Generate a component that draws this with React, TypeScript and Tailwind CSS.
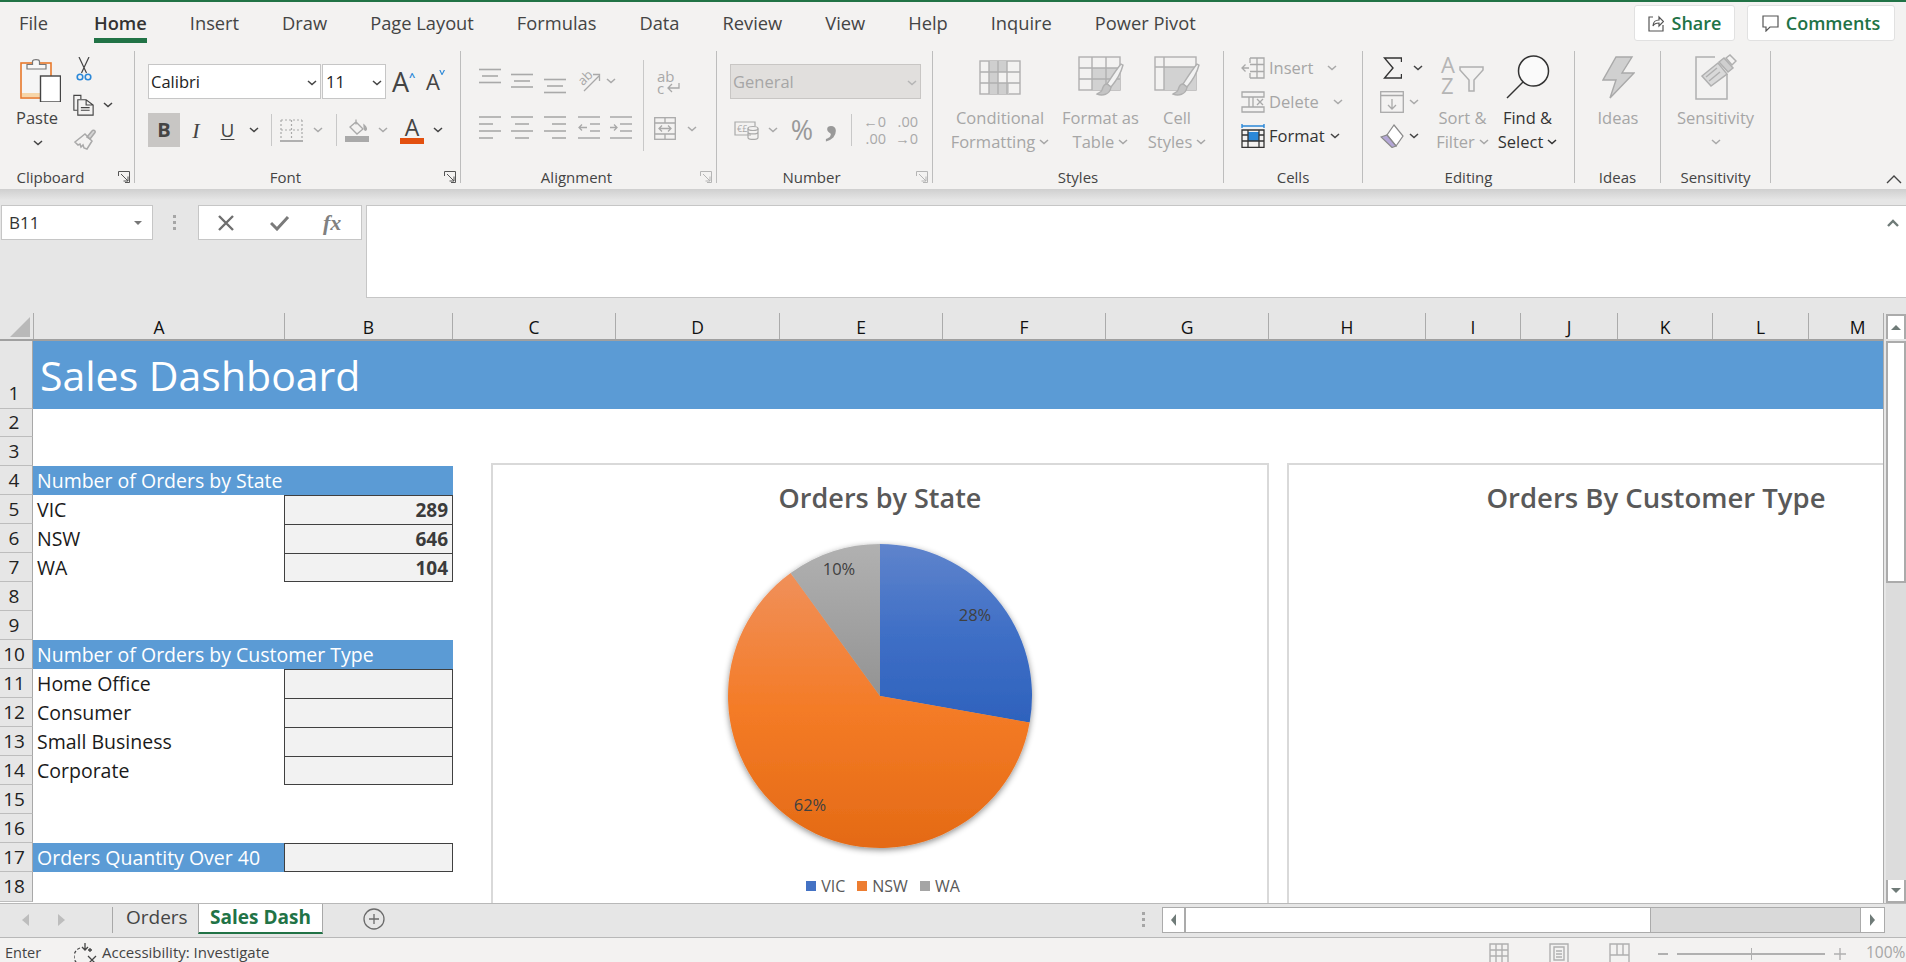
import type { ReactNode } from "react";

const dim = "#a9a9a9";
const ink = "#444444";

function Chev({ color = ink, className = "" }: { color?: string; className?: string }) {
  return (
    <svg width="10" height="6" viewBox="0 0 10 6" className={`shrink-0 ${className}`}>
      <path d="M1 1l4 3.6L9 1" fill="none" stroke={color} strokeWidth="1.5" />
    </svg>
  );
}

function Launcher({ color = "#666666" }: { color?: string }) {
  return (
    <svg width="12" height="12" viewBox="0 0 12 12" className="absolute right-[4px] bottom-0">
      <path d="M.5 5V.5H11.5V11.5H7M3 3l7 7M10 5.5V10H5.5" fill="none" stroke={color} strokeWidth="1" />
    </svg>
  );
}

function Group({ w, label, launcher, pr = 0, children }: { w: number; label: string; launcher?: string; pr?: number; children: ReactNode }) {
  return (
    <div className="relative flex h-[132px] shrink-0 flex-col border-r border-[#bdbdbd]" style={{ width: w }}>
      <div className="flex h-[117px] shrink-0 items-start">{children}</div>
      <div className="flex h-[18px] shrink-0 items-center justify-center text-[15px] leading-[18px] text-[#444444]" style={{ paddingRight: pr }}>{label}</div>
      {launcher && <Launcher color={launcher} />}
    </div>
  );
}

function Big({ icon, lines, color, chev, w, ml, iconTop = 10 }: { icon: ReactNode; lines: string[]; color: string; chev?: boolean; w: number; ml: number; iconTop?: number }) {
  return (
    <div className="flex shrink-0 flex-col items-center text-[16.5px] leading-[24px]" style={{ width: w, marginLeft: ml, color }}>
      <div className="flex h-[44px] items-center justify-center" style={{ marginTop: iconTop - 6 }}>{icon}</div>
      <div className="mt-[7px] whitespace-nowrap">{lines[0]}</div>
      <div className="flex items-center gap-[4px] whitespace-nowrap">
        {lines[1]}
        {chev && <Chev color={color} />}
      </div>
    </div>
  );
}

function Lines({ rows, h = 35 }: { rows: [number, number, number][]; h?: number }) {
  return (
    <svg width="22" height={h} viewBox={`0 0 22 ${h}`} className="shrink-0">
      {rows.map(([a, b, y], i) => (
        <path key={i} d={`M${a} ${y}H${b}`} stroke={dim} strokeWidth="1.6" />
      ))}
    </svg>
  );
}

function PasteIcon() {
  return (
    <svg width="41" height="44" viewBox="0 0 41 44">
      <rect x="1" y="5" width="30" height="35" fill="#f5f5f5" stroke="#e8792b" strokeWidth="1.6" />
      <rect x="2" y="35" width="18" height="4" fill="#f6d5a8" />
      <path d="M7 11V6.5h5.5V3.5C12.5 1 19.5 1 19.5 3.5V6.5H26V11Z" fill="#f7f7f7" stroke="#777" strokeWidth="1.2" />
      <rect x="20.5" y="18" width="20" height="26" fill="#fff" stroke="#444" strokeWidth="1.4" />
    </svg>
  );
}

function ScissorsIcon() {
  return (
    <svg width="16" height="24" viewBox="0 0 16 24">
      <path d="M3 0l7.5 16M13 0L5.5 16" stroke="#444" strokeWidth="1.2" fill="none" />
      <circle cx="4" cy="20" r="2.8" fill="none" stroke="#2b88d8" strokeWidth="1.6" />
      <circle cx="12" cy="20" r="2.8" fill="none" stroke="#2b88d8" strokeWidth="1.6" />
    </svg>
  );
}

function CopyIcon() {
  return (
    <svg width="24" height="24" viewBox="0 0 24 24" fill="none" stroke="#444" strokeWidth="1.3">
      <path d="M5 18H1V1h8v4" />
      <path d="M5.5 6H15l8 6v11.5H5.5ZM15 6v6h8M9 15h10M9 18h10" />
    </svg>
  );
}

function BrushIcon() {
  return (
    <svg width="23" height="22" viewBox="0 0 23 22" fill="none" stroke={dim} strokeWidth="1.5">
      <path d="M14 9l5-6c1-2 4 0 3 1.500l-5 6.500Z" fill="#d4d4d4" />
      <path d="M12 6l7 7-5 8-3-1-1-3-2 2-1-3-2 1-3-3Z" />
    </svg>
  );
}

function BordersIcon() {
  return (
    <svg width="23" height="23" viewBox="0 0 23 23" fill="none" stroke={dim} strokeWidth="1.2">
      <path d="M1 1H22M1 1V21M22 1V21M11.500 1V21M1 11H22" strokeDasharray="2 2" />
      <path d="M0 22H23" strokeWidth="1.8" />
    </svg>
  );
}

function FillIcon() {
  return (
    <svg width="24" height="23" viewBox="0 0 24 23" fill="none" stroke={dim} strokeWidth="1.3">
      <path d="M11 0.500v5M5 8l6-5 7 7-6 5Z" />
      <path d="M19 6c2 2 3 4 2 5s-2-1-2-5Z" fill={dim} />
      <rect x="0" y="17" width="24" height="6" fill={dim} stroke="none" />
    </svg>
  );
}

function OrientIcon() {
  return (
    <svg width="24" height="22" viewBox="0 0 24 22" className="overflow-visible">
      <text x="2" y="13" fontSize="13" fill={dim} transform="rotate(-45 8 10)" fontFamily="Open Sans, sans-serif">ab</text>
      <path d="M7 21L22 6M16 4.500h6.500V11" fill="none" stroke={dim} strokeWidth="1.3" />
    </svg>
  );
}

function WrapIcon() {
  return (
    <div className="relative h-[24px] w-[23px] text-[15px] leading-[12px] text-[#a9a9a9]">
      <div>ab</div>
      <div>c</div>
      <svg width="14" height="11" viewBox="0 0 14 11" className="absolute right-0 bottom-0" fill="none" stroke={dim} strokeWidth="1.3">
        <path d="M13 0v5H2M6 1L2 5l4 4" />
      </svg>
    </div>
  );
}

function IndentIcon({ flip }: { flip?: boolean }) {
  return (
    <svg width="22" height="35" viewBox="0 0 22 35" fill="none" stroke={dim} strokeWidth="1.6" className="shrink-0">
      <path d="M0 4H22M0 25H22" />
      {flip ? <path d="M10 11H22M10 18H22M0 14.500H7M4 11.500l3 3-3 3" strokeWidth="1.3" /> : <path d="M12 11H22M12 18H22M1 14.500H9M4 11.500l-3 3 3 3" strokeWidth="1.3" />}
    </svg>
  );
}

function MergeIcon() {
  return (
    <svg width="22" height="23" viewBox="0 0 22 23" fill="none" stroke={dim} strokeWidth="1.3">
      <rect x="0.7" y="0.7" width="20.600" height="21.600" />
      <path d="M1 6H21M1 17H21M11 1V6M11 17V22M5 11.500H17M8 8.500l-3 3 3 3M14 8.500l3 3-3 3" />
    </svg>
  );
}

function AccountingIcon() {
  return (
    <svg width="25" height="20" viewBox="0 0 25 20" fill="none" stroke={dim} strokeWidth="1.2">
      <path d="M17 15H1V2h20v4" />
      <text x="3" y="12" fontSize="9" fill={dim} stroke="none" fontFamily="Open Sans, sans-serif">€£</text>
      <ellipse cx="19" cy="8.500" rx="5" ry="2" />
      <path d="M14 8.500V17.500c0 2.600 10 2.600 10 0V8.500M14 12c0 2.600 10 2.600 10 0" />
    </svg>
  );
}

function CondIcon() {
  return (
    <svg width="42" height="35" viewBox="0 0 42 35" fill="none" stroke="#b0b0b0" strokeWidth="1.4">
      <rect x="1" y="1" width="40" height="33" />
      <rect x="10" y="1" width="18" height="11" fill="#cfcfcf" stroke="none" />
      <rect x="10" y="12" width="9" height="11" fill="#cfcfcf" stroke="none" />
      <rect x="10" y="23" width="20" height="11" fill="#cfcfcf" stroke="none" />
      <path d="M1 12H41M1 23H41M10 1V34M19 1V34M28 1V34" />
    </svg>
  );
}

function TableBrushIcon({ cellStyle }: { cellStyle?: boolean }) {
  return (
    <svg width="46" height="42" viewBox="0 0 46 42" fill="none" stroke="#b0b0b0" strokeWidth="1.4">
      <rect x="1" y="1" width="41" height="33" />
      {cellStyle ? <rect x="10" y="11" width="32" height="23" fill="#d2d2d2" stroke="none" /> : <rect x="14" y="12" width="28" height="22" fill="#d2d2d2" stroke="none" />}
      {cellStyle ? <path d="M1 11H42M10 1V34" /> : <path d="M1 12H42M1 23H42M14 1V34M28 1V34" />}
      <path d="M43 8C38 14 33 22 29 28l4 3C38 25 43 17 45 9Z" fill="#f2f2f2" />
      <path d="M29 28c-4 0-4 4-5 6-1 3-4 3-5 4 5 2 13 1 14-7Z" fill="#c4c4c4" />
    </svg>
  );
}

function InsertIcon() {
  return (
    <svg width="24" height="22" viewBox="0 0 24 22" fill="none" stroke={dim} strokeWidth="1.3">
      <path d="M9 1H23V21H9M9 1V6M9 16V21M9 7.500H23M9 14.500H23M16 1V21" />
      <path d="M8 11H1M4.500 7.500L1 11l3.500 3.500" />
    </svg>
  );
}

function DeleteIcon() {
  return (
    <svg width="24" height="22" viewBox="0 0 24 22" fill="none" stroke={dim} strokeWidth="1.3">
      <path d="M1 1H23V6H1ZM1 16H23V21H1ZM8 6V16M12 6V16" />
      <path d="M16 8l6 6M22 8l-6 6" />
    </svg>
  );
}

function FormatIcon() {
  return (
    <svg width="24" height="24" viewBox="0 0 24 24" fill="none">
      <path d="M1 2H23M1 0V4M23 0V4" stroke="#2b88d8" strokeWidth="1.4" />
      <rect x="7" y="8" width="11" height="9" fill="#2b88d8" />
      <path d="M1 6H23V23.300H1ZM1 17H23M7 6V23M18 6V23M1 11H7M18 11H23" stroke="#333" strokeWidth="1.3" />
    </svg>
  );
}

function SigmaIcon() {
  return (
    <svg width="19" height="22" viewBox="0 0 19 22" fill="none" stroke="#333" strokeWidth="1.4">
      <path d="M18.500 5V1H1.500l8.500 10-8.500 10H18.500v-4" />
    </svg>
  );
}

function FillDownIcon() {
  return (
    <svg width="24" height="22" viewBox="0 0 24 22" fill="none" stroke={dim} strokeWidth="1.3">
      <rect x="0.700" y="0.700" width="22.600" height="20.600" />
      <path d="M1 4.500H23M12 8V18M8 14l4 4 4-4" />
    </svg>
  );
}

function EraserIcon() {
  return (
    <svg width="24" height="24" viewBox="0 0 24 24" stroke="#8a8a8a" strokeWidth="1.2">
      <path d="M14 1l9 11-7 10-9-11Z" fill="#fff" />
      <path d="M7 11l9 11-4 1.500L1 13Z" fill="#b4a7d6" />
    </svg>
  );
}

function SortIcon() {
  return (
    <div className="relative h-[41px] w-[43px] text-[#b5b5b5]">
      <div className="absolute left-0 top-[-3px] text-[22px] leading-[21px]">A</div>
      <div className="absolute left-0 top-[18px] text-[22px] leading-[21px]">Z</div>
      <svg width="25" height="26" viewBox="0 0 25 26" className="absolute right-0 top-[9px]" fill="none" stroke="#b0b0b0" strokeWidth="1.5">
        <path d="M1 1H24V4L15 14V25H10V14L1 4Z" />
      </svg>
    </div>
  );
}

function SearchIcon() {
  return (
    <svg width="44" height="44" viewBox="0 0 44 44" fill="none" stroke="#333" strokeWidth="1.5">
      <circle cx="27.500" cy="16" r="15" fill="#fafafa" />
      <path d="M17 27L1 43" />
    </svg>
  );
}

function BoltIcon() {
  return (
    <svg width="33" height="43" viewBox="0 0 33 43">
      <path d="M14 1H30L20 17H32L8 42l6-18H1Z" fill="#d0d0d0" stroke="#a9a9a9" strokeWidth="1.4" />
    </svg>
  );
}

function SensitivityIcon() {
  return (
    <svg width="42" height="46" viewBox="0 0 42 46" fill="none" stroke="#b0b0b0" strokeWidth="1.5">
      <path d="M20 3H1V45H32V20" />
      <path d="M7 22L23 9l9 11-16 12Z" fill="#d9d9d9" />
      <path d="M11 23l11-9M14 27l11-9" />
      <path d="M24 8l5-4 9 10-5 4Z" fill="#cfcfcf" />
      <path d="M31 4l4-3 6 6-4 4Z" />
    </svg>
  );
}

function AccessIcon() {
  return (
    <svg width="23" height="24" viewBox="0 0 23 24" fill="none" stroke="#444" strokeWidth="1.300">
      <path d="M6 5a9 9 0 1 0 6 17" strokeDasharray="3 2" />
      <path d="M11 0v7M8 4l3 3 3-3M16 5v4M14 7h4M14 13l8 8M22 13l-8 8" />
    </svg>
  );
}

function Ribbon() {
  return (
    <div className="relative flex h-[141px] bg-[#f3f2f1] pt-[3px]">
      <Group w={135} label="Clipboard" launcher="#555555" pr={33}>
        <div className="ml-[20px] mt-[7px] flex w-[41px] flex-col items-center text-[16.500px] leading-[22px] text-[#444444]">
          <PasteIcon />
          <div className="mt-[5px] pr-[7px]">Paste</div>
          <Chev className="mt-[11px] -translate-x-[3px]" />
        </div>
        <div className="ml-[12px] flex w-[40px] flex-col">
          <div className="ml-[3px] mt-[6px]"><ScissorsIcon /></div>
          <div className="mt-[12px] flex items-center gap-[9px]"><CopyIcon /><Chev /></div>
          <div className="mt-[11px]"><BrushIcon /></div>
        </div>
      </Group>

      <Group w={326} label="Font" launcher="#555555" pr={24}>
        <div className="ml-[13px] mt-[13px] flex flex-col">
          <div className="flex items-center">
            <div className="flex h-[35px] w-[173px] items-center justify-between border border-[#c6c6c6] bg-white pl-[2px] pr-[3px] pt-[2px] text-[16.500px] text-[#222222]">Calibri<Chev /></div>
            <div className="ml-[1px] flex h-[35px] w-[64px] items-center justify-between border border-[#c6c6c6] bg-white pl-[3px] pr-[3px] pt-[2px] text-[16.500px] text-[#222222]">11<Chev /></div>
            <div className="relative ml-[6px] h-[35px] w-[24px] text-[27px] leading-[35px] text-[#444444]">A<span className="absolute left-[17px] top-[-5px] text-[11px] font-bold text-[#2b88d8]">^</span></div>
            <div className="relative ml-[10px] h-[35px] w-[20px] text-[22px] leading-[35px] text-[#444444]">A<span className="absolute left-[13px] top-[-10px] -scale-y-100 text-[11px] font-bold text-[#2b88d8]">^</span></div>
          </div>
          <div className="mt-[14px] flex h-[34px] items-center text-[#444444]">
            <div className="flex h-[34px] w-[32px] items-center justify-center bg-[#c8c6c4] text-[20px] font-bold">B</div>
            <div className="w-[32px] text-center font-['Liberation_Serif',serif] text-[22px] italic">I</div>
            <div className="w-[31px] text-center text-[19px] leading-[22px] underline underline-offset-2">U</div>
            <div className="flex w-[22px] justify-center"><Chev /></div>
            <div className="ml-[6px] h-[32px] w-px bg-[#c8c8c8]" />
            <div className="ml-[8px]"><BordersIcon /></div>
            <div className="ml-[10px]"><Chev color={dim} /></div>
            <div className="ml-[13px] h-[32px] w-px bg-[#c8c8c8]" />
            <div className="ml-[8px]"><FillIcon /></div>
            <div className="ml-[9px]"><Chev color={dim} /></div>
            <div className="ml-[12px] flex w-[24px] flex-col items-center">
              <span className="h-[20px] text-[23px] leading-[20px]">A</span>
              <span className="mt-[1px] h-[6px] w-[24px] bg-[#e3500f]" />
            </div>
            <div className="ml-[9px]"><Chev /></div>
          </div>
        </div>
      </Group>

      <Group w={256} label="Alignment" launcher="#b5b5b5" pr={24}>
        <div className="ml-[18px] mt-[13px] flex w-[164px] shrink-0 flex-col">
          <div className="flex h-[35px] items-start">
            <Lines rows={[[0, 22, 5.5], [3, 19, 12], [0, 22, 18.5]]} />
            <div className="ml-[10px]"><Lines rows={[[0, 22, 10.5], [3, 19, 17], [0, 22, 23]]} /></div>
            <div className="ml-[11px]"><Lines rows={[[0, 22, 15.5], [3, 19, 22], [0, 22, 28.5]]} /></div>
            <div className="ml-[11px] mt-[6px]"><OrientIcon /></div>
            <div className="ml-[5px] mt-[14px]"><Chev color={dim} /></div>
          </div>
          <div className="mt-[14px] flex h-[34px] items-start">
            <Lines rows={[[0, 22, 4], [0, 14, 11], [0, 22, 18], [0, 14, 25]]} />
            <div className="ml-[10px]"><Lines rows={[[0, 22, 4], [4, 18, 11], [0, 22, 18], [4, 18, 25]]} /></div>
            <div className="ml-[11px]"><Lines rows={[[0, 22, 4], [8, 22, 11], [0, 22, 18], [8, 22, 25]]} /></div>
            <div className="ml-[12px]"><IndentIcon /></div>
            <div className="ml-[10px]"><IndentIcon flip /></div>
          </div>
        </div>
        <div className="mt-[9px] h-[91px] w-px bg-[#c8c8c8]" />
        <div className="ml-[13px] mt-[19px] flex flex-col">
          <WrapIcon />
          <div className="-ml-[3px] mt-[23px] flex items-center gap-[11px]"><MergeIcon /><Chev color={dim} /></div>
        </div>
      </Group>

      <Group w={216} label="Number" launcher="#b5b5b5" pr={26}>
        <div className="ml-[13px] mt-[13px] flex flex-col">
          <div className="flex h-[35px] w-[191px] items-center justify-between border border-[#c8c6c4] bg-[#e1dfdd] pl-[2px] pr-[3px] pt-[2px] text-[16.500px] text-[#a6a6a6]">General<Chev color="#b5b5b5" /></div>
          <div className="mt-[14px] flex h-[34px] items-center">
            <div className="ml-[4px]"><AccountingIcon /></div>
            <div className="ml-[9px]"><Chev color={dim} /></div>
            <div className="ml-[11px] w-[26px] text-center text-[27px] leading-[34px] text-[#999999]">%</div>
            <div className="ml-[10px] h-[34px] w-[13px] text-center font-['Liberation_Serif',serif] text-[50px] font-bold leading-[6px] text-[#999999]">,</div>
            <div className="ml-[13px] h-[32px] w-px bg-[#c8c8c8]" />
            <div className="ml-[7px] flex w-[27px] flex-col text-right text-[14.500px] leading-[17px] text-[#a9a9a9]"><span>←0</span><span>.00</span></div>
            <div className="ml-[5px] flex w-[27px] flex-col text-right text-[14.500px] leading-[17px] text-[#a9a9a9]"><span>.00</span><span>→0</span></div>
          </div>
        </div>
      </Group>

      <Group w={291} label="Styles">
        <Big w={102} ml={16} color="#a6a6a6" chev icon={<CondIcon />} lines={["Conditional", "Formatting"]} />
        <Big w={77} ml={11} color="#a6a6a6" chev icon={<TableBrushIcon />} lines={["Format as", "Table"]} />
        <Big w={58} ml={9} color="#a6a6a6" chev icon={<TableBrushIcon cellStyle />} lines={["Cell", "Styles"]} />
      </Group>

      <Group w={139} label="Cells">
        <div className="ml-[17px] flex flex-col text-[16.500px]">
          <div className="flex h-[34px] items-center text-[#a6a6a6]"><InsertIcon /><span className="ml-[4px]">Insert</span><Chev color={dim} className="ml-[14px]" /></div>
          <div className="flex h-[34px] items-center text-[#a6a6a6]"><DeleteIcon /><span className="ml-[4px]">Delete</span><Chev color={dim} className="ml-[14px]" /></div>
          <div className="flex h-[34px] items-center text-[#333333]"><FormatIcon /><span className="ml-[4px]">Format</span><Chev className="ml-[5px]" /></div>
        </div>
      </Group>

      <Group w={212} label="Editing">
        <div className="ml-[17px] flex w-[44px] flex-col">
          <div className="flex h-[34px] items-center gap-[11px] pl-[3px]"><SigmaIcon /><Chev /></div>
          <div className="flex h-[34px] items-center gap-[5px]"><FillDownIcon /><Chev color={dim} /></div>
          <div className="flex h-[34px] items-center gap-[5px]"><EraserIcon /><Chev /></div>
        </div>
        <Big w={53} ml={12} color="#a6a6a6" chev icon={<SortIcon />} lines={["Sort &", "Filter"]} />
        <Big w={61} ml={8} color="#333333" chev icon={<SearchIcon />} lines={["Find &", "Select"]} />
      </Group>

      <Group w={86} label="Ideas">
        <Big w={86} ml={0} color="#a6a6a6" icon={<BoltIcon />} lines={["Ideas", ""]} />
      </Group>

      <Group w={110} label="Sensitivity">
        <div className="flex w-[110px] flex-col items-center text-[16.500px] leading-[24px] text-[#a6a6a6]">
          <div className="mt-[3px]"><SensitivityIcon /></div>
          <div className="mt-[6px]">Sensitivity</div>
          <Chev color={dim} className="mt-[9px]" />
        </div>
      </Group>

      <svg width="16" height="9" viewBox="0 0 16 9" className="absolute bottom-[5px] right-[4px]" fill="none" stroke="#444" strokeWidth="1.400">
        <path d="M1 8l7-7 7 7" />
      </svg>
    </div>
  );
}

function FormulaBar() {
  return (
    <div className="h-[124px] bg-[#e6e6e6]">
      <div className="h-[11px] bg-gradient-to-b from-[#cfcfcf] to-[#e6e6e6]" />
      <div className="mt-[5px] flex h-[92px] items-start pl-[1px]">
        <div className="flex h-[35px] w-[152px] items-center justify-between border border-[#c6c6c6] bg-white pl-[7px] pr-[10px] text-[17px] text-[#333333]">
          B11
          <span className="h-0 w-0 border-x-[4px] border-t-[4px] border-x-transparent border-t-[#777777]" />
        </div>
        <div className="ml-[20px] mt-[10px] flex w-[3px] flex-col gap-[3px]">
          <span className="h-[3px] w-[3px] bg-[#a6a6a6]" />
          <span className="h-[3px] w-[3px] bg-[#a6a6a6]" />
          <span className="h-[3px] w-[3px] bg-[#a6a6a6]" />
        </div>
        <div className="ml-[22px] flex h-[35px] w-[164px] items-center border border-[#c6c6c6] bg-white text-[#777777]">
          <svg width="18" height="16" viewBox="0 0 18 16" className="ml-[18px]" fill="none" stroke="#6f6f6f" strokeWidth="2.400"><path d="M2 1l14 14M16 1L2 15" /></svg>
          <svg width="20" height="16" viewBox="0 0 20 16" className="ml-[35px]" fill="none" stroke="#7a7a7a" strokeWidth="3"><path d="M1 8l6 6L18 2" /></svg>
          <span className="ml-[33px] font-['Liberation_Serif',serif] text-[22px] font-bold italic leading-[33px] text-[#808080]">fx</span>
        </div>
        <div className="relative ml-[4px] h-[93px] flex-1 border-y border-l border-[#c6c6c6] bg-white">
          <svg width="12" height="8" viewBox="0 0 12 8" className="absolute right-[7px] top-[13px]" fill="none" stroke="#6f7b78" strokeWidth="2.400"><path d="M1 7l5-5 5 5" /></svg>
        </div>
      </div>
    </div>
  );
}

const cols: [string, number][] = [
  ["A", 251], ["B", 168], ["C", 163], ["D", 164], ["E", 163], ["F", 163], ["G", 163],
  ["H", 157], ["I", 95], ["J", 97], ["K", 95], ["L", 96], ["M", 98],
];

type Row = { n: number; h: number; a?: string; b?: string; box?: "first" | "mid" | "last" | "solo"; head?: boolean };

const rows: Row[] = [
  { n: 2, h: 28 },
  { n: 3, h: 29 },
  { n: 4, h: 29, a: "Number of Orders by State", head: true },
  { n: 5, h: 29, a: "VIC", b: "289", box: "mid" },
  { n: 6, h: 29, a: "NSW", b: "646", box: "mid" },
  { n: 7, h: 29, a: "WA", b: "104", box: "last" },
  { n: 8, h: 29 },
  { n: 9, h: 29 },
  { n: 10, h: 29, a: "Number of Orders by Customer Type", head: true },
  { n: 11, h: 29, a: "Home Office", b: "", box: "mid" },
  { n: 12, h: 29, a: "Consumer", b: "", box: "mid" },
  { n: 13, h: 29, a: "Small Business", b: "", box: "mid" },
  { n: 14, h: 29, a: "Corporate", b: "", box: "last" },
  { n: 15, h: 29 },
  { n: 16, h: 29 },
  { n: 17, h: 29, a: "Orders Quantity Over 40", b: "", box: "solo" },
  { n: 18, h: 30 },
];

function RowHead({ n, h, end }: { n: number; h: number; end?: boolean }) {
  return (
    <div
      className={`flex w-[33px] shrink-0 justify-center border-r border-b border-r-[#a8a8a8] border-b-[#bdbdbd] bg-[#e6e6e6] pr-[4px] text-[19px] text-[#222222] ${end ? "items-end leading-[30px]" : "items-center"}`}
      style={{ height: h }}
    >
      {n}
    </div>
  );
}

function SheetRow({ row }: { row: Row }) {
  const isBlue = row.head || row.n === 17;
  return (
    <div className="flex" style={{ height: row.h }}>
      <RowHead n={row.n} h={row.h} />
      {row.a !== undefined && (
        <div className={`flex h-full items-center whitespace-nowrap pl-[4px] pt-[1px] text-[19.5px] ${isBlue ? "bg-[#5b9bd5] text-white" : "text-[#1a1a1a]"} ${row.head ? "w-[420px]" : "w-[251px]"}`}>
          {row.a}
        </div>
      )}
      {row.box && (
        <div className={`flex h-full w-[169px] items-center justify-end border-x border-t border-[#404040] bg-[#f2f2f2] pr-[4px] pt-[1px] text-[19px] font-bold text-[#3b3b3b] ${row.box === "mid" ? "" : "border-b"}`}>
          {row.b}
        </div>
      )}
    </div>
  );
}

function PieChart() {
  const cx = 160;
  const cy = 156;
  const r = 152;
  const pt = (pct: number) => {
    const t = (pct / 100) * 2 * Math.PI;
    return `${cx + r * Math.sin(t)} ${cy - r * Math.cos(t)}`;
  };
  const slice = (from: number, to: number) => `M${cx} ${cy}L${pt(from)}A${r} ${r} 0 ${to - from > 50 ? 1 : 0} 1 ${pt(to)}Z`;
  return (
    <svg width="320" height="320" viewBox="0 0 320 320">
      <defs>
        <linearGradient id="pieBlue" x1="0" y1="0" x2="0" y2="1">
          <stop offset="0" stopColor="#5f84cc" />
          <stop offset="0.5" stopColor="#3f6fc6" />
          <stop offset="1" stopColor="#2e62bd" />
        </linearGradient>
        <linearGradient id="pieOrange" x1="0" y1="0" x2="0" y2="1">
          <stop offset="0" stopColor="#f0905a" />
          <stop offset="0.5" stopColor="#f47b26" />
          <stop offset="1" stopColor="#e46a15" />
        </linearGradient>
        <linearGradient id="pieGrey" x1="0" y1="0" x2="0" y2="1">
          <stop offset="0" stopColor="#b1b1b1" />
          <stop offset="1" stopColor="#939393" />
        </linearGradient>
        <filter id="pieShadow" x="-10%" y="-10%" width="120%" height="120%">
          <feDropShadow dx="0" dy="2" stdDeviation="3" floodColor="#000000" floodOpacity="0.45" />
        </filter>
      </defs>
      <g filter="url(#pieShadow)">
        <path d={slice(0, 27.8)} fill="url(#pieBlue)" />
        <path d={slice(27.8, 90)} fill="url(#pieOrange)" />
        <path d={slice(90, 100)} fill="url(#pieGrey)" />
      </g>
      <g fontSize="16.500" fill="#404040" textAnchor="middle" fontFamily="Open Sans, sans-serif">
        <text x="119" y="35">10%</text>
        <text x="255" y="81">28%</text>
        <text x="90" y="271">62%</text>
      </g>
    </svg>
  );
}

function Legend({ color, label }: { color: string; label: string }) {
  return (
    <div className="flex items-center gap-[5px]">
      <span className="h-[10px] w-[10px]" style={{ background: color }} />
      {label}
    </div>
  );
}

function Scrollbar() {
  return (
    <div className="ml-[2px] flex h-full w-[20px] flex-col pt-[1px]">
      <div className="flex h-[25px] items-center justify-center border-x-2 border-t-2 border-[#ababab] bg-white">
        <span className="h-0 w-0 border-x-[5px] border-b-[5px] border-x-transparent border-b-[#6f7b78]" />
      </div>
      <div className="mt-[2px] h-[242px] border-2 border-[#ababab] bg-white" />
      <div className="flex-1 bg-[#dcdcdc]" />
      <div className="flex h-[23px] items-center justify-center border-x-2 border-b-2 border-[#ababab] bg-white">
        <span className="h-0 w-0 border-x-[5px] border-t-[5px] border-x-transparent border-t-[#6f7b78]" />
      </div>
    </div>
  );
}

function Sheet() {
  return (
    <div className="flex h-[590px] bg-[#e6e6e6]">
      <div className="relative h-full w-[1884px] overflow-hidden border-r border-[#ababab] bg-white">
        <div className="flex h-[28px] border-b-2 border-[#a0a0a0] bg-[#e6e6e6]">
          <div className="relative w-[33px] shrink-0">
            <span className="absolute bottom-[2px] right-[3px] h-0 w-0 border-b-[20px] border-l-[20px] border-b-[#b9b9b9] border-l-transparent" />
          </div>
          {cols.map(([c, w]) => (
            <div key={c} className="flex h-[26px] shrink-0 items-center justify-center border-l border-[#ababab] pt-[3px] text-[17.500px] text-[#111111]" style={{ width: w }}>
              {c}
            </div>
          ))}
        </div>
        <div className="flex h-[68px]">
          <RowHead n={1} h={68} end />
          <div className="flex flex-1 items-center bg-[#5b9bd5] pl-[7px] text-[41px] leading-[68px] text-white">Sales Dashboard</div>
        </div>
        {rows.map(r => (
          <SheetRow key={r.n} row={r} />
        ))}

        <div className="absolute left-[491px] top-[150px] flex h-[520px] w-[778px] flex-col items-center border-2 border-[#d9d9d9] bg-white pt-[13px] text-[#595959]">
          <div className="text-[27px] font-semibold leading-[40px]">Orders by State</div>
          <div className="mt-[22px] h-[320px]"><PieChart /></div>
          <div className="mt-[16px] flex items-center gap-[12px] pl-[6px] text-[16px] leading-[20px]">
            <Legend color="#4472c4" label="VIC" />
            <Legend color="#ed7d31" label="NSW" />
            <Legend color="#a5a5a5" label="WA" />
          </div>
        </div>
        <div className="absolute left-[1287px] top-[150px] flex h-[520px] w-[738px] flex-col items-center border-2 border-[#d9d9d9] bg-white pt-[13px] text-[#595959]">
          <div className="text-[27.500px] font-semibold leading-[40px]">Orders By Customer Type</div>
        </div>
      </div>
      <Scrollbar />
    </div>
  );
}

function SheetTabs() {
  return (
    <div className="flex h-[35px] items-start border-t border-b border-[#b8b8b8] bg-[#e6e6e6]">
      <span className="ml-[22px] mt-[10px] h-0 w-0 border-y-[6px] border-r-[7px] border-y-transparent border-r-[#bdbdbd]" />
      <span className="ml-[29px] mt-[10px] h-0 w-0 border-y-[6px] border-l-[7px] border-y-transparent border-l-[#bdbdbd]" />
      <span className="ml-[47px] mt-[3px] h-[26px] w-px bg-[#a8a8a8]" />
      <div className="ml-[13px] w-[72px] text-[19px] leading-[27px] text-[#444444]">Orders</div>
      <div className="h-[30px] w-[125px] border-x border-b-2 border-x-[#a8a8a8] border-b-[#217346] bg-white text-center text-[19px] font-bold leading-[27px] text-[#217346]">Sales Dash</div>
      <svg width="24" height="24" viewBox="0 0 24 24" className="ml-[39px] mt-[3px]" fill="none" stroke="#6b6b6b" strokeWidth="1.300">
        <circle cx="12" cy="12" r="10" />
        <path d="M7 12H17M12 7V17" />
      </svg>
      <div className="ml-[756px] mt-[8px] flex w-[3px] flex-col gap-[3px]">
        <span className="h-[3px] w-[3px] bg-[#a6a6a6]" />
        <span className="h-[3px] w-[3px] bg-[#a6a6a6]" />
        <span className="h-[3px] w-[3px] bg-[#a6a6a6]" />
      </div>
      <div className="ml-[17px] mt-[3px] flex h-[26px] w-[723px] border border-[#ababab]">
        <div className="flex w-[23px] items-center justify-center border-r-2 border-[#ababab] bg-white">
          <span className="h-0 w-0 border-y-[6px] border-r-[5px] border-y-transparent border-r-[#6f7b78]" />
        </div>
        <div className="w-[465px] border-r border-[#ababab] bg-white" />
        <div className="flex-1 bg-[#d9d9d9]" />
        <div className="flex w-[24px] items-center justify-center border-l border-[#ababab] bg-white">
          <span className="h-0 w-0 border-y-[6px] border-l-[5px] border-y-transparent border-l-[#6f7b78]" />
        </div>
      </div>
    </div>
  );
}

function StatusBar() {
  return (
    <div className="flex h-[24px] items-start overflow-hidden bg-[#f3f2f1] text-[15px] leading-[29px] text-[#444444]">
      <span className="ml-[5px] w-[69px] text-[14.500px]">Enter</span>
      <div className="mt-[5px]"><AccessIcon /></div>
      <span className="ml-[5px] w-[1387px]">Accessibility: Investigate</span>
      <svg width="20" height="20" viewBox="0 0 20 20" className="mt-[5px]" fill="none" stroke="#b0b0b0" strokeWidth="1.400">
        <path d="M1 1H19V20H1ZM1 7H19M1 13H19M7 1V20M13 1V20" />
      </svg>
      <svg width="20" height="20" viewBox="0 0 20 20" className="ml-[40px] mt-[5px]" fill="none" stroke="#b0b0b0" strokeWidth="1.400">
        <path d="M1 1H19V20H1ZM5 4H15V17H5ZM7 8H13M7 11H13M7 14H13" />
      </svg>
      <svg width="21" height="20" viewBox="0 0 21 20" className="ml-[40px] mt-[5px]" fill="none" stroke="#b0b0b0" strokeWidth="1.400">
        <path d="M1 1H20V20H1ZM1 12H20M8 1V12M14 1V12" />
      </svg>
      <span className="ml-[28px] mt-[15px] h-[2px] w-[10px] bg-[#b0b0b0]" />
      <div className="relative ml-[9px] mt-[15px] h-[2px] w-[148px] bg-[#b0b0b0]">
        <span className="absolute left-[74px] top-[-5px] h-[12px] w-[1px] bg-[#b0b0b0]" />
      </div>
      <svg width="12" height="12" viewBox="0 0 12 12" className="ml-[9px] mt-[10px]" fill="none" stroke="#b0b0b0" strokeWidth="1.400"><path d="M0 6H12M6 0V12" /></svg>
      <span className="ml-[20px] text-[15.500px] text-[#a6a6a6]">100%</span>
    </div>
  );
}

export default function App() {
  const tabs = ["File", "Home", "Insert", "Draw", "Page Layout", "Formulas", "Data", "Review", "View", "Help", "Inquire", "Power Pivot"];
  return (
    <div className="flex h-[962px] w-[1906px] flex-col overflow-hidden bg-[#f3f2f1] font-['Open_Sans',sans-serif]">
      <div className="flex h-[48px] shrink-0 items-start border-t-2 border-[#217346] bg-[#f3f2f1] pl-[19px] pr-[11px]">
        <div className="flex gap-[43px]">
          {tabs.map(t => (
            <div key={t} className={`h-[41px] whitespace-nowrap border-b-[5px] pt-[6px] text-[18.300px] leading-[30px] ${t === "Home" ? "ml-[3px] border-[#217346] font-semibold text-[#333333]" : "border-transparent text-[#444444]"}`}>
              {t}
            </div>
          ))}
        </div>
        <div className="ml-auto mt-[3px] flex gap-[12px]">
          <div className="flex h-[36px] w-[101px] items-center justify-center gap-[8px] rounded-[3px] border border-[#e1e1e1] bg-white text-[18px] font-semibold text-[#217346]">
            <svg width="16" height="17" viewBox="0 0 16 17" fill="none" stroke="#555" strokeWidth="1.200"><path d="M5 2H1V16H15V10M5 11c0-4 3-6 6-6V2l4.500 4.500L11 11V8c-3 0-5 1-6 3Z" /></svg>
            Share
          </div>
          <div className="flex h-[36px] w-[148px] items-center justify-center gap-[7px] rounded-[3px] border border-[#e1e1e1] bg-white text-[18px] font-semibold text-[#217346]">
            <svg width="17" height="17" viewBox="0 0 17 17" fill="none" stroke="#555" strokeWidth="1.200"><path d="M1 1H16V12H8L4 16V12H1Z" /></svg>
            Comments
          </div>
        </div>
      </div>
      <Ribbon />
      <FormulaBar />
      <Sheet />
      <SheetTabs />
      <StatusBar />
    </div>
  );
}
